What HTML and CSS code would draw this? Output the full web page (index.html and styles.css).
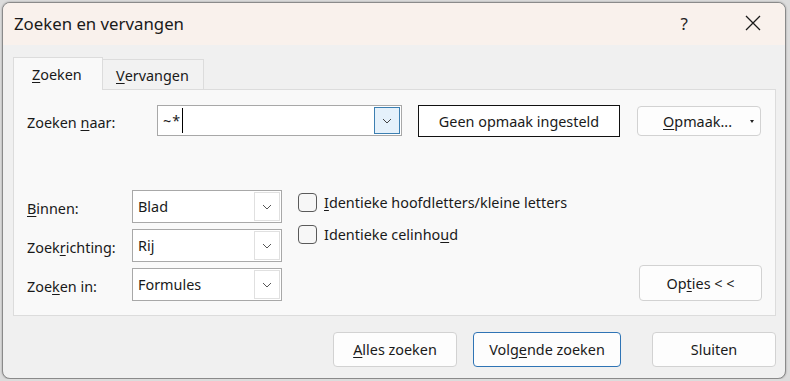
FILE: index.html
```html
<!DOCTYPE html>
<html lang="nl">
<head>
  <meta charset="UTF-8" />
  <title>Zoeken en vervangen</title>
  <link rel="stylesheet" href="styles.css">
</head>
<body>

<div class="dialog">
  <div class="titlebar">
    <span class="title">Zoeken en vervangen</span>
    <span class="help">?</span>
    <svg class="close" width="16" height="16" viewBox="0 0 16 16"><path d="M1 1L15 15M15 1L1 15" stroke="#1a1a1a" stroke-width="1.3" fill="none"/></svg>
  </div>

  <div class="content">
    <div class="tabs">
      <div class="tab active"><u>Z</u>oeken</div>
      <div class="tab"><u>V</u>ervangen</div>
    </div>

    <div class="panel">
      <div class="find-row">
        <span class="find-label">Zoeken <u>n</u>aar:</span>
        <div class="combo">
          <span class="combo-text">~*</span><span class="caret"></span>
          <span class="combo-btn"><svg width="10" height="6" viewBox="0 0 10 6"><path d="M1 1L5 5L9 1" stroke="#444" fill="none"/></svg></span>
        </div>
        <div class="format-preview">Geen opmaak ingesteld</div>
        <button class="btn btn-format"><span><u>O</u>pmaak...</span><span class="tri"></span></button>
      </div>

      <div class="options">
        <div class="selects">
          <span class="opt-label"><u>B</u>innen:</span>
          <div class="select"><span>Blad</span><span class="select-btn"><svg width="10" height="6" viewBox="0 0 10 6"><path d="M1 1L5 5L9 1" stroke="#555" fill="none"/></svg></span></div>
          <span class="opt-label">Zoek<u>r</u>ichting:</span>
          <div class="select"><span>Rij</span><span class="select-btn"><svg width="10" height="6" viewBox="0 0 10 6"><path d="M1 1L5 5L9 1" stroke="#555" fill="none"/></svg></span></div>
          <span class="opt-label">Zoe<u>k</u>en in:</span>
          <div class="select"><span>Formules</span><span class="select-btn"><svg width="10" height="6" viewBox="0 0 10 6"><path d="M1 1L5 5L9 1" stroke="#555" fill="none"/></svg></span></div>
        </div>

        <div class="checks">
          <div class="check"><span class="box"></span><span><u>I</u>dentieke hoofdletters/kleine letters</span></div>
          <div class="check"><span class="box"></span><span>Identieke celinho<u>u</u>d</span></div>
        </div>

        <button class="btn btn-options">Op<u>t</u>ies &lt; &lt;</button>
      </div>
    </div>

    <div class="actions">
      <button class="btn btn-action"><u>A</u>lles zoeken</button>
      <button class="btn btn-action btn-default">Volg<u>e</u>nde zoeken</button>
      <button class="btn btn-action btn-close">Sluiten</button>
    </div>
  </div>
</div>

</body>
</html>
```

FILE: styles.css
```css
* { box-sizing: border-box; }
body { margin: 0; background: #dcdcdc; font-family: "Segoe UI", "Noto Sans", sans-serif; font-size: 14.4px; color: #1a1a1a; }
u { text-decoration-thickness: 1px; text-underline-offset: 2px; }

.dialog { margin: 2px 0 0 2px; width: 784px; height: 377px; border: 1px solid #8a8a8a; border-radius: 8px; overflow: hidden; background: #f0f0f0; box-shadow: 0 0 2px rgba(0,0,0,0.35); display: flex; flex-direction: column; }

/* Title bar */
.titlebar { height: 42px; background: #f9f1ec; display: flex; align-items: center; padding: 0 0 0 11px; flex-shrink: 0; }
.title { font-size: 16.8px; flex: 1; margin-top: -1px; }
.help { font-size: 17px; margin-right: 57px; margin-top: -2px; color: #222; }
.close { margin-right: 24px; margin-top: -3px; }

/* Content */
.content { padding: 12px 9px 0 10px; }
.tabs { display: flex; align-items: flex-end; height: 32px; }
.tab { border: 1px solid #dcdcdc; border-bottom: none; font-size: 14.4px; display: flex; align-items: center; }
.tab.active { width: 90px; height: 33px; margin-bottom: -1px; background: #f9f9f9; padding-left: 18px; position: relative; z-index: 1; }
.tab:not(.active) { width: 101px; height: 30px; background: #f2f2f2; border-left: none; padding-left: 13px; padding-top: 2px; }

.panel { height: 227px; background: #f9f9f9; border: 1px solid #dcdcdc; padding: 15px 13px 14px 13px; display: flex; flex-direction: column; justify-content: space-between; }

.find-row { display: flex; align-items: flex-start; }
.find-label { width: 130px; line-height: 31px; padding-top: 2px; }
.combo { width: 245px; height: 31px; background: #fff; border: 1px solid #a8a8a8; display: flex; align-items: center; padding: 1px 1px 1px 5px; }
.combo-text { letter-spacing: 1px; }
.caret { width: 1px; height: 25px; background: #000; margin-left: 1px; }
.combo-btn { margin-left: auto; width: 26px; height: 27px; background: #e5f1fb; border: 1px solid #3c7fb1; display: flex; align-items: center; justify-content: center; }
.format-preview { width: 202px; height: 32px; margin-left: 16px; background: #fff; border: 1px solid #111; display: flex; align-items: center; justify-content: center; }

.btn { font-family: inherit; font-size: 14.4px; color: #1a1a1a; background: #fdfdfd; border: 1px solid #d2d2d2; border-radius: 4px; padding: 0; cursor: pointer; }
.btn-format { width: 124px; height: 30px; margin-left: 17px; margin-top: 1px; display: flex; align-items: center; justify-content: flex-end; padding-right: 6px; }
.btn-format .tri { width: 0; height: 0; border-left: 2.5px solid transparent; border-right: 2.5px solid transparent; border-top: 3px solid #222; margin-left: 18px; }

.options { display: flex; align-items: flex-start; }
.selects { display: grid; grid-template-columns: 105px 150px; grid-auto-rows: 33px; row-gap: 6px; }
.opt-label { display: flex; align-items: center; padding-top: 3px; }
.select { background: #fff; border: 1px solid #a8a8a8; display: flex; align-items: center; padding: 2px 1px 2px 5px; }
.select span:first-child { flex: 1; }
.select-btn { width: 26px; height: 29px; border: 1px solid #e0e0e0; display: flex; align-items: center; justify-content: center; }

.checks { margin-left: 16px; padding-top: 3px; display: flex; flex-direction: column; gap: 13px; }
.check { display: flex; align-items: center; height: 19px; line-height: 19px; }
.box { width: 19px; height: 19px; border: 1px solid #5a5a5a; border-radius: 4px; background: #f7f7f7; margin-right: 7px; }

.btn-options { margin-left: auto; align-self: flex-end; width: 123px; height: 36px; }

.actions { display: flex; justify-content: flex-end; margin-top: 16px; padding-right: 0; }
.btn-action { height: 35px; width: 124px; }
.btn-default { width: 148px; margin-left: 16px; border-color: #2f74b5; }
.btn-close { margin-left: 31px; }
```
